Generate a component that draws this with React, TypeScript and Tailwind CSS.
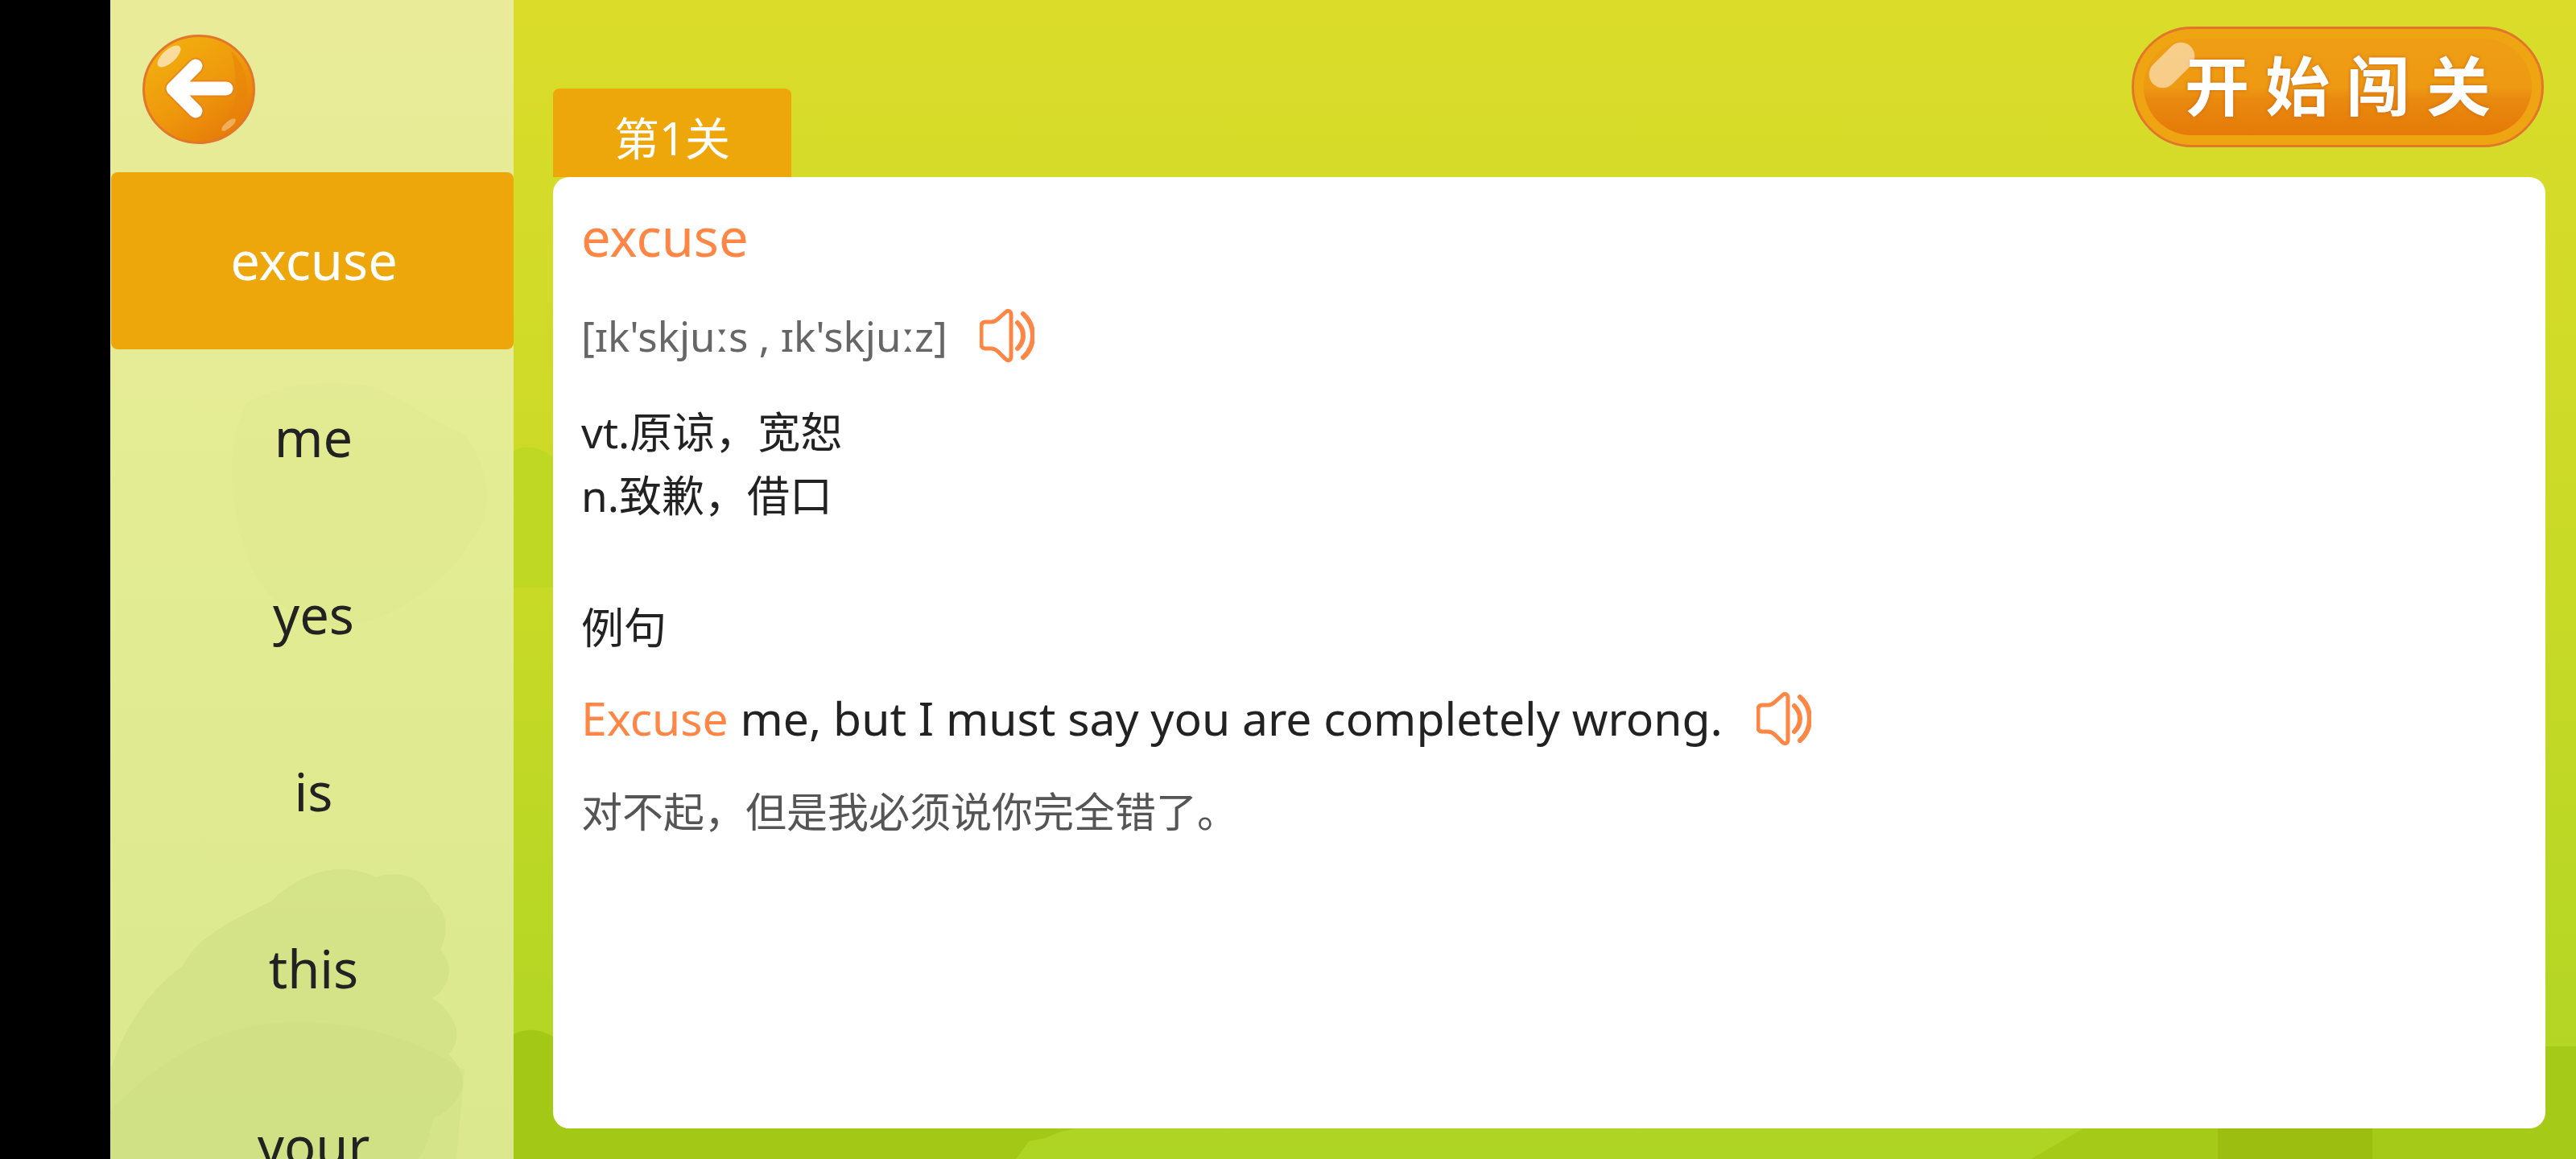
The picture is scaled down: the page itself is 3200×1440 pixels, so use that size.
import React from "react"

const words = ["excuse", "me", "yes", "is", "this", "your"]

function SpeakerIcon({ className }: { className: string }) {
  return (
    <svg viewBox="0 0 68 68" fill="none" stroke="#ff8645" strokeWidth="5" strokeLinecap="round" strokeLinejoin="round" className={className}>
      <path d="M7 17h7c4 0 6-1 9-4l9-8c3-3 7-2 7 3v52c0 5-4 6-7 3l-9-9c-3-3-5-4-9-4H7c-3 0-5-2-5-5V22c0-3 2-5 5-5z" />
      <path d="M47 18c5 5 7 10 7 16s-2 11-7 16" strokeWidth="6" />
      <path d="M54 7c8 7 12 16 12 27s-4 20-12 27" strokeWidth="6" />
    </svg>
  )
}

function BackBall() {
  return (
    <svg viewBox="0 0 140 136" className="w-[140px] h-[136px]">
      <defs>
        <linearGradient id="ball" x1="0.15" y1="0.05" x2="0.8" y2="0.95">
          <stop offset="0" stopColor="#f2b00e" />
          <stop offset="0.55" stopColor="#ee980c" />
          <stop offset="1" stopColor="#e67a08" />
        </linearGradient>
      </defs>
      <ellipse cx="70" cy="68" rx="68.5" ry="66.5" fill="url(#ball)" stroke="#e2762a" strokeWidth="3" />
      <path d="M110 20c12 12 20 28 20 48 0 22-10 40-26 52-12 6-24 8-38 8 30-8 50-30 50-60 0-18-2-34-6-48z" fill="#e8830a" opacity="0.55" />
      <ellipse cx="33" cy="27" rx="18" ry="8" transform="rotate(-42 33 27)" fill="#fff" opacity="0.6" />
      <ellipse cx="107" cy="112" rx="11" ry="4" transform="rotate(-40 107 112)" fill="#fff" opacity="0.35" />
      <path d="M66 39L38 67l28 28M40 67h64" fill="none" stroke="#e2762a" strokeWidth="21" strokeLinecap="round" strokeLinejoin="round" opacity="0.55" />
      <path d="M66 39L38 67l28 28M40 67h64" fill="none" stroke="#fff" strokeWidth="17" strokeLinecap="round" strokeLinejoin="round" />
    </svg>
  )
}

export default function App() {
  return (
    <div className="flex w-[3200px] h-[1440px] bg-black overflow-hidden font-['Noto_Sans','Noto_Sans_CJK_SC',sans-serif]">
      <div className="w-[137px] shrink-0" />

      <div className="relative w-[501px] shrink-0 overflow-hidden bg-gradient-to-b from-[#e9eb98] via-[#e2ec92] to-[#dbe88e]">
        <svg viewBox="0 0 501 1440" className="absolute inset-0 w-full h-full">
          <path d="M170 500c40-20 90-30 150-20 40 10 70 40 120 60 30 40 40 90 10 130-30 50-90 100-170 110-60-10-100-50-110-90-20-60-30-130 0-190z" fill="#d6e488" opacity="0.18" />
          <path d="M0 1330c20-60 50-100 90-130 20-40 70-60 110-80 40-40 90-50 130-30 30-10 60 0 70 30 20 10 20 40 10 60 20 20 10 50-10 60 30 20 40 50 20 70 30 30 20 60-20 80 0 10-10 50-20 50H0z" fill="#ccdc82" opacity="0.5" />
          <path d="M0 1380c60-60 130-110 230-110 80 0 150 20 210 60l-10 110H0z" fill="#ccdc82" opacity="0.35" />
        </svg>
        <div className="relative flex flex-col">
          <div className="h-[214px] pl-[40px] pt-[43px]">
            <BackBall />
          </div>
          {words.map((word, i) => (
            <div
              key={word}
              className={
                i === 0
                  ? "h-[220px] shrink-0 flex items-center justify-center rounded-[8px] bg-[#eea70a] text-white text-[65px] ml-px pl-1"
                  : "h-[220px] shrink-0 flex items-center justify-center text-[#222222] text-[65px] pl-1"
              }
            >
              {word}
            </div>
          ))}
        </div>
      </div>

      <div className="relative flex-1 flex flex-col pl-[49px] pr-[38px] pb-[38px] bg-gradient-to-b from-[#dbdc2a] via-[#c8da26] to-[#aed424]">
        <svg viewBox="0 0 2562 1440" className="absolute inset-0 w-full h-full">
          <path d="M0 1285c20-10 40-5 60 10l640 10v97l-20 4-20 8-20 4-23 32H0z" fill="#a4c816" />
          <path d="M1885 1440l65-38 10-102h602v140z" fill="#a6ca18" />
          <path d="M2117 1440v-40h192v40z" fill="#9cbe10" />
          <path d="M0 560c20-10 40 0 50 10v160H0z" fill="#bfd824" />
        </svg>

        <div className="relative h-[220px] shrink-0 flex justify-between">
          <div className="self-end w-[296px] h-[110px] pt-[12px] flex items-center justify-center rounded-t-[8px] bg-[#eea70a] text-white text-[56px]">
            第1关
          </div>
          <div className="relative self-start mt-[33px] mr-[2px] w-[512px] h-[150px] rounded-full border-[3px] border-[#e2762a] bg-[#efa412] p-[12px]">
            <div className="flex items-center justify-center w-full h-full rounded-full bg-[linear-gradient(to_bottom,#ee9e14_0%,#ee9a12_50%,#e98a0f_62%,#e57a08_100%)]">
              <span className="text-white text-[80px] leading-none font-bold tracking-[20px] pl-[20px] pb-[4px] [text-shadow:0_0_4px_#c9641c]">开始闯关</span>
            </div>
            <div className="absolute left-[14px] top-[28px] w-[66px] h-[34px] -rotate-[45deg] rounded-full bg-white/50" />
          </div>
        </div>

        <div className="relative flex-1 rounded-[20px] bg-white pl-[35px] pt-[34px]">
          <div className="text-[#ff8645] text-[65px] leading-[80px]">excuse</div>
          <div className="mt-[43px] flex items-center text-[#666666] text-[51px] h-[80px]">
            <span>[ɪk'skjuːs , ɪk'skjuːz]</span>
            <SpeakerIcon className="ml-[40px] w-[68px] h-[68px]" />
          </div>
          <div className="mt-[40px] text-[#222222] text-[53px] leading-[79px]">
            <div>vt.原谅，宽恕</div>
            <div>n.致歉，借口</div>
          </div>
          <div className="mt-[85px] text-[#222222] text-[53px] leading-[80px]">例句</div>
          <div className="mt-[33px] flex items-center text-[#222222] text-[57px] h-[80px]">
            <span>
              <span className="text-[#ff8645]">Excuse</span> me, but I must say you are completely wrong.
            </span>
            <SpeakerIcon className="ml-[42px] w-[68px] h-[68px]" />
          </div>
          <div className="mt-[35px] text-[#555555] text-[51px] leading-[80px]">对不起，但是我必须说你完全错了。</div>
        </div>
      </div>
    </div>
  )
}
